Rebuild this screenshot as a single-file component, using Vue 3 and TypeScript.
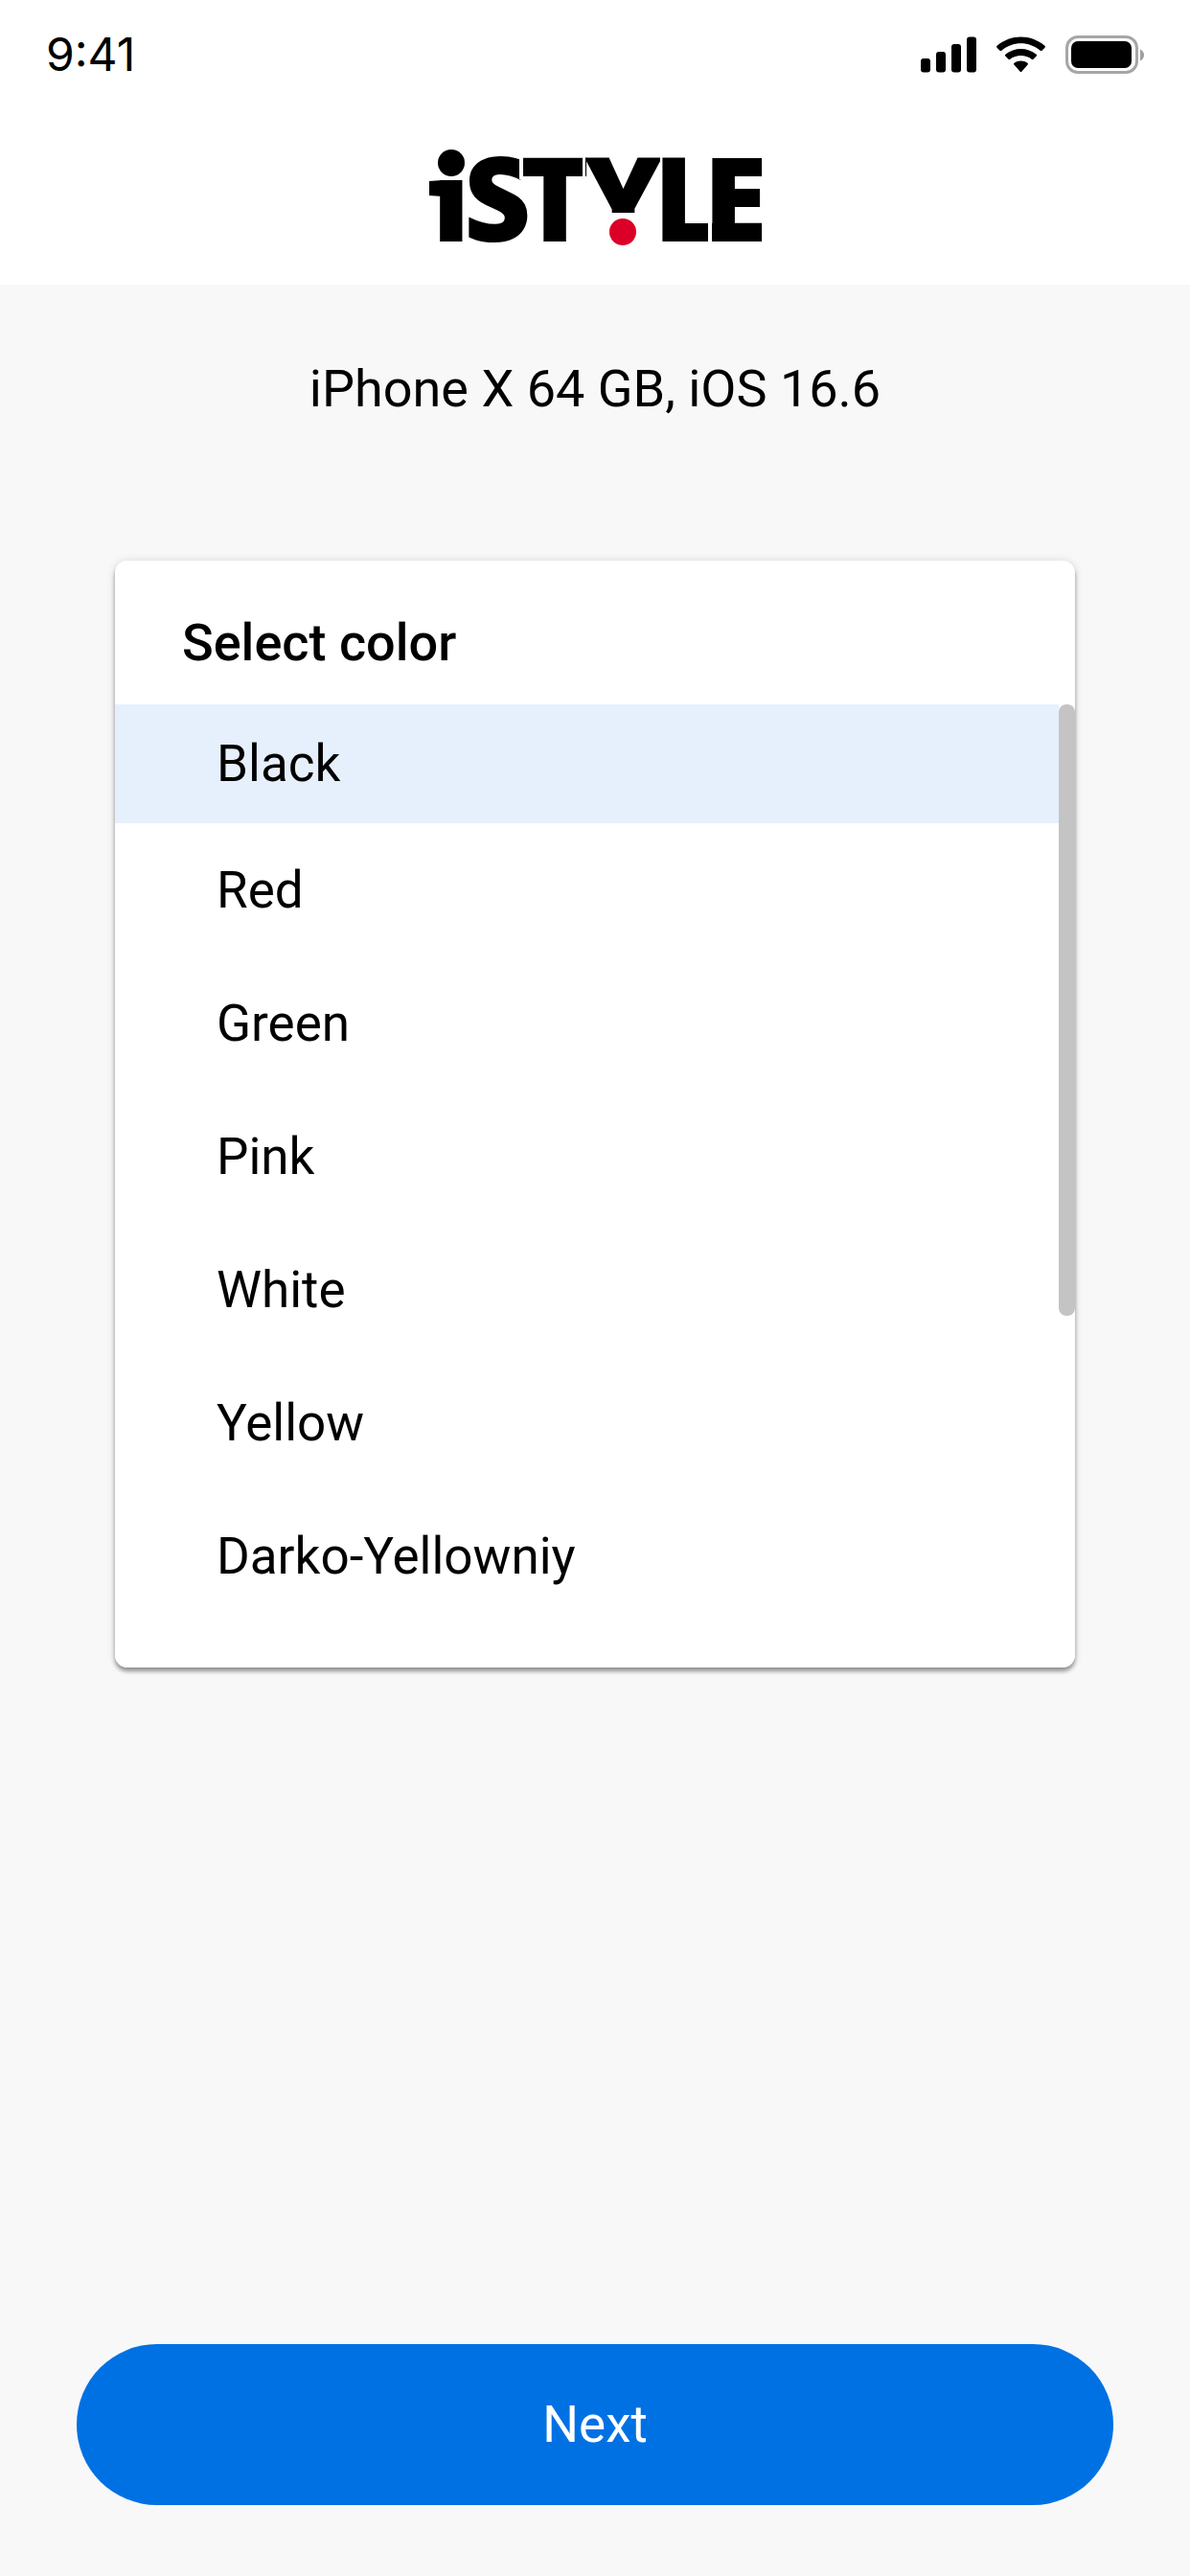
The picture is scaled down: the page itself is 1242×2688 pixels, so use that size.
<script setup lang="ts">
import { ref } from 'vue'

const device = 'iPhone X 64 GB, iOS 16.6'
const colors: string[] = ['Black', 'Red', 'Green', 'Pink', 'White', 'Yellow', 'Darko-Yellowniy']
const selected = ref<string>('Black')
</script>

<template>
  <div class="screen">
    <header class="top">
      <div class="status">
        <time class="clock">9:41</time>
        <svg class="indicators" width="236" height="44" viewBox="0 0 236 44" aria-hidden="true">
          <rect x="1" y="23" width="10" height="14.500" rx="3" />
          <rect x="17" y="16" width="10" height="21.500" rx="3" />
          <rect x="33" y="8" width="10" height="29.500" rx="3" />
          <rect x="49" y="0.500" width="10" height="37" rx="3" />
          <path d="M80.500 11.800Q79.500 10.800 80.600 9.800C95 -2.600 116 -2.600 130.400 9.800Q131.500 10.800 130.500 11.800L127.500 14.800Q126.700 15.600 125.700 14.700C114 4.700 97 4.700 85.300 14.700Q84.300 15.600 83.500 14.800Z" />
          <path d="M89.300 20.600Q88.300 19.600 89.400 18.700C98.800 11 112.200 11 121.600 18.700Q122.700 19.600 121.700 20.600L118.500 23.800Q117.700 24.600 116.700 23.800C110.200 18.800 100.800 18.800 94.300 23.800Q93.300 24.600 92.500 23.800Z" />
          <path d="M98.400 29.600Q97.400 28.600 98.600 27.800C102.800 24.800 108.200 24.800 112.400 27.800Q113.600 28.600 112.600 29.600L106.500 36.500Q105.500 37.500 104.500 36.500Z" />
          <rect class="shell" x="153.500" y="0.500" width="73" height="37" rx="11.500" />
          <rect x="158" y="5" width="63" height="28" rx="7" />
          <path class="cap" d="M230 13.500C235.400 15.500 235.400 23.500 230 25.500Z" />
        </svg>
      </div>
      <svg class="logo" width="350" height="100" viewBox="0 0 350 100" role="img" aria-label="iSTYLE">
        <text class="mark" x="5 38 97 164 236 288" y="96">iSTYLE</text>
        <rect class="gap" x="0" y="0" width="38" height="32" />
        <path d="M2 33L16 32V49L2 48Z" />
        <circle cx="25" cy="14" r="14" />
        <rect class="gap" x="96" y="6" width="4" height="25" />
        <rect class="gap" x="162" y="6" width="3" height="25" />
        <rect class="gap" x="243" y="6" width="2" height="92" />
        <rect class="gap" x="293" y="6" width="4" height="92" />
        <rect class="gap" x="182" y="66" width="44" height="34" />
        <circle class="dot" cx="204" cy="86" r="14" />
      </svg>
    </header>

    <main class="content">
      <h1 class="device">{{ device }}</h1>
      <fieldset class="card">
        <legend class="title">Select color</legend>
        <div class="list">
          <label v-for="c in colors" :key="c" class="option" :class="{ active: c === selected }">
            <input v-model="selected" class="radio" type="radio" name="color" :value="c" />
            <span>{{ c }}</span>
          </label>
          <span class="thumb"></span>
        </div>
      </fieldset>
    </main>

    <footer class="actions">
      <button class="next" type="button">Next</button>
    </footer>
  </div>
</template>

<style>
body {
  margin: 0;
  background: #f8f8f8;
}
</style>

<style scoped>
.screen {
  display: flex;
  flex-direction: column;
  min-height: 100vh;
  background: #f8f8f8;
  color: #000;
  font-family: Roboto, sans-serif;
  font-size: 53px;
  line-height: 64px;
}
.top {
  display: flex;
  flex-direction: column;
  align-items: center;
  height: 297px;
  background: #fff;
}
.status {
  display: flex;
  align-items: flex-start;
  justify-content: space-between;
  align-self: stretch;
  height: 118px;
  padding: 38px 46px 0 48px;
  box-sizing: border-box;
}
.clock {
  font-family: Inter, sans-serif;
  font-size: 48px;
  line-height: 38px;
}
.shell {
  fill: none;
  stroke: #a6a6a6;
  stroke-width: 3;
}
.cap {
  fill: #a0a0a0;
}
.indicators,
.logo {
  display: block;
  overflow: visible;
}
.logo {
  margin-top: 38px;
}
.mark {
  font-family: "Open Sans", sans-serif;
  font-weight: 800;
  font-size: 122px;
}
.gap {
  fill: #fff;
}
.dot {
  fill: #dc0028;
}
.content {
  padding: 77px 120px 48px;
}
.device {
  margin: 0 0 147px;
  font-size: 54px;
  font-weight: 400;
  text-align: center;
}
.card {
  margin: 0;
  padding: 54px 0 47px;
  border: 0;
  border-radius: 13px;
  background: #fff;
  box-shadow: 0 4px 4px rgba(0, 0, 0, 0.38), 0 0 10px rgba(0, 0, 0, 0.12);
}
.title {
  float: left;
  width: 100%;
  margin-bottom: 32px;
  padding: 0 70px;
  box-sizing: border-box;
  font-size: 54px;
  font-weight: 500;
}
.list {
  position: relative;
  clear: both;
}
.option {
  position: relative;
  display: flex;
  align-items: center;
  height: 139px;
  padding: 0 106px;
  cursor: pointer;
}
.option:first-child {
  height: 124px;
}
.option.active {
  background: linear-gradient(#e6f0fd, #e6f0fd) no-repeat 0 0 / calc(100% - 17px) 100%;
}
.radio {
  position: absolute;
  inset: 0;
  margin: 0;
  appearance: none;
  cursor: pointer;
}
.thumb {
  position: absolute;
  top: 0;
  right: 0;
  width: 17px;
  height: 638px;
  border-radius: 8px;
  background: #c4c4c4;
}
.actions {
  margin-top: auto;
  padding: 0 80px 74px;
}
.next {
  display: block;
  width: 100%;
  height: 168px;
  border: 0;
  border-radius: 84px;
  background: #0071e3;
  color: #fff;
  font: inherit;
  cursor: pointer;
}
</style>
